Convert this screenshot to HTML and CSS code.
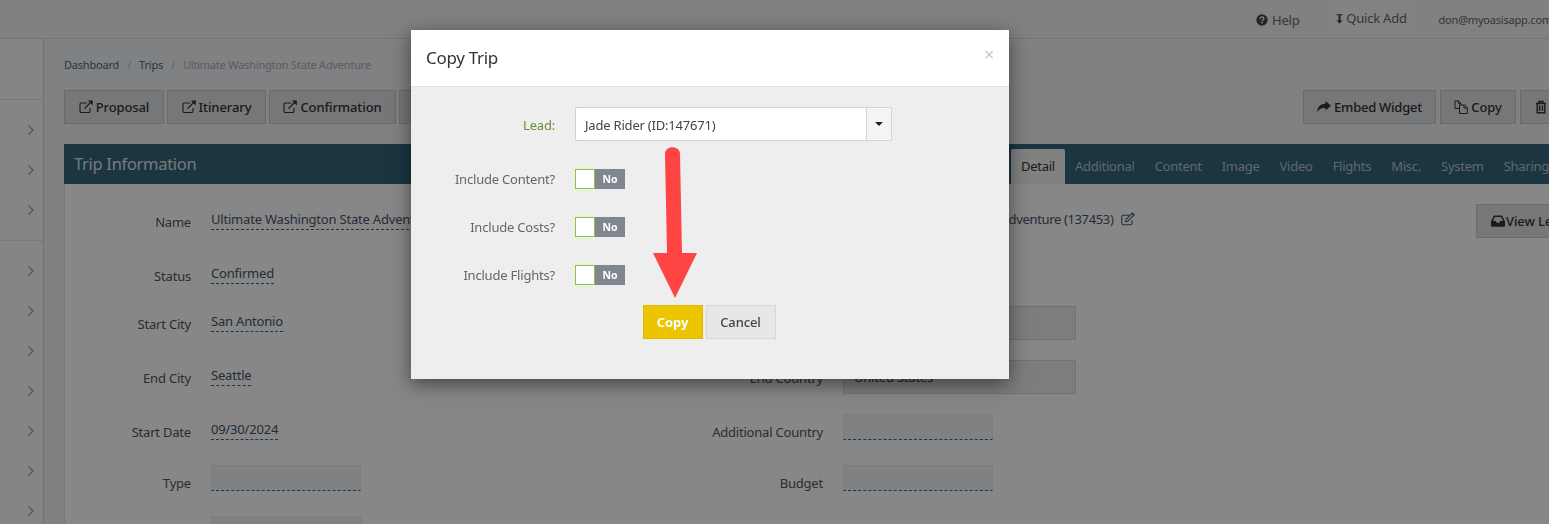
FILE: index.html
```html
<!DOCTYPE html>
<html lang="en">
<head>
<meta charset="utf-8">
<title>Copy Trip</title>
<link rel="stylesheet" href="styles.css">
</head>
<body>
<svg class="defs" width="0" height="0" aria-hidden="true">
  <symbol id="i-ext" viewBox="0 0 14 14"><path d="M11 8v3.2a1.3 1.3 0 0 1-1.3 1.3H2.3A1.3 1.3 0 0 1 1 11.2V4.3A1.3 1.3 0 0 1 2.3 3H8" fill="none" stroke="currentColor" stroke-width="1.1"/><path d="M5.5 8.6 11.8 2.3" fill="none" stroke="currentColor" stroke-width="1.3"/><path d="M8.8.6h5v5z" fill="currentColor"/></symbol>
  <symbol id="i-chev" viewBox="0 0 8 12"><path d="M1.5 1.5 6 6l-4.5 4.5" fill="none" stroke="currentColor" stroke-width="1.1"/></symbol>
  <symbol id="i-edit" viewBox="0 0 14 14"><path d="M11 8.5v2.8a1.4 1.4 0 0 1-1.4 1.4H2.2A1.4 1.4 0 0 1 .8 11.3V4.6a1.4 1.4 0 0 1 1.4-1.4H8" fill="none" stroke="currentColor" stroke-width="1.1"/><path d="M5 7.4 11 1.4l1.8 1.8-6 6-2.2.5z" fill="none" stroke="currentColor" stroke-width="1.1"/><path d="M10.6 1.2 11.6.4 13.8 2.6 13 3.6z" fill="currentColor"/></symbol>
</svg>

<div class="app">
  <header class="topbar">
    <a class="top-item"><svg class="ic-help" viewBox="0 0 14 14"><circle cx="7" cy="7" r="6.6" fill="currentColor"/><path d="M4.9 5.5c0-3 4.3-2.7 4.3-.2 0 1.7-2.2 1.6-2.2 3.1" fill="none" stroke="#f4f4f4" stroke-width="1.6"/><rect x="6.1" y="9.3" width="1.8" height="1.7" fill="#f4f4f4"/></svg> Help</a>
    <div class="top-quick"><a class="quick-box"><svg class="ic-quick" viewBox="0 0 8 12"><path d="M0.5 1h7v1.4H5v5.8h2.4L4 11.6.6 8.2H3V2.4H.5z" fill="currentColor"/></svg>Quick Add</a></div>
    <a class="top-user">don@myoasisapp.com</a>
  </header>

  <div class="shell">
    <nav class="sidebar">
      <div class="side-top"></div>
      <ul class="side-group">
        <li class="side-item"><svg class="ic-chev"><use href="#i-chev"/></svg></li>
        <li class="side-item"><svg class="ic-chev"><use href="#i-chev"/></svg></li>
        <li class="side-item"><svg class="ic-chev"><use href="#i-chev"/></svg></li>
      </ul>
      <ul class="side-group side-last">
        <li class="side-item"><svg class="ic-chev"><use href="#i-chev"/></svg></li>
        <li class="side-item"><svg class="ic-chev"><use href="#i-chev"/></svg></li>
        <li class="side-item"><svg class="ic-chev"><use href="#i-chev"/></svg></li>
        <li class="side-item"><svg class="ic-chev"><use href="#i-chev"/></svg></li>
        <li class="side-item"><svg class="ic-chev"><use href="#i-chev"/></svg></li>
        <li class="side-item"><svg class="ic-chev"><use href="#i-chev"/></svg></li>
        <li class="side-item"><svg class="ic-chev"><use href="#i-chev"/></svg></li>
      </ul>
    </nav>

    <main class="main">
      <div class="crumbs">
        <a>Dashboard</a><span class="sep">/</span><a>Trips</a><span class="sep">/</span><span class="crumb-now">Ultimate Washington State Adventure</span>
      </div>

      <div class="toolbar">
        <div class="tool-left">
          <a class="btn btn-proposal"><svg class="ic"><use href="#i-ext"/></svg>Proposal</a>
          <a class="btn btn-itin"><svg class="ic"><use href="#i-ext"/></svg>Itinerary</a>
          <a class="btn btn-conf"><svg class="ic"><use href="#i-ext"/></svg>Confirmation</a>
          <a class="btn btn-hidden"><svg class="ic"><use href="#i-ext"/></svg>Invoice</a>
        </div>
        <div class="tool-right">
          <a class="btn btn-embed"><svg class="ic ic-share" viewBox="0 0 14 12"><path d="M8.5 0 14 4.8 8.5 9.6V6.9C4.5 6.8 2 7.6.4 11.4.2 6.6 2.6 3 8.5 2.7z" fill="currentColor"/></svg>Embed Widget</a>
          <a class="btn btn-copy"><svg class="ic" viewBox="0 0 14 14"><path d="M5.5 8.5H1V1h3.6L6.8 3.2V5M4.5 1v2.6h2.3M5.5 5h5l2.8 2.6v5.9H5.5zM10 5v3h3.3" fill="none" stroke="currentColor" stroke-width="1"/></svg>Copy</a>
          <a class="btn btn-trash"><svg class="ic" viewBox="0 0 14 14"><path d="M2 3.5h10M5 3.5V1.5h4v2M3.2 3.5v9.3h7.6V3.5M5.6 5.5v5.5M8.4 5.5v5.5" fill="none" stroke="currentColor" stroke-width="1.4"/></svg>Delete</a>
        </div>
      </div>

      <section class="panel">
        <div class="panel-head">
          <h2 class="panel-title">Trip Information</h2>
          <ul class="tabs">
            <li class="tab tab-on">Detail</li>
            <li class="tab">Additional</li>
            <li class="tab">Content</li>
            <li class="tab">Image</li>
            <li class="tab">Video</li>
            <li class="tab">Flights</li>
            <li class="tab">Misc.</li>
            <li class="tab">System</li>
            <li class="tab">Sharing</li>
          </ul>
        </div>
        <div class="form">
          <div class="lbl">Name</div>
          <div class="val"><span class="edit">Ultimate Washington State Adventure</span></div>
          <div class="lbl"></div>
          <div class="val val-link"><span class="link-text">Ultimate Washington State Adventure (137453)<svg class="ic-edit"><use href="#i-edit"/></svg></span><a class="btn btn-leads"><svg class="ic ic-inbox" viewBox="0 0 14 12"><path d="M3 .5h8l3 6V11a.8.8 0 0 1-.8.8H.8A.8.8 0 0 1 0 11V6.5zM3.9 2 2 6h2.8l.9 1.8h2.6L9.2 6H12l-1.9-4z" fill="currentColor" fill-rule="evenodd"/></svg>View Leads</a></div>

          <div class="lbl">Status</div>
          <div class="val"><span class="edit">Confirmed</span></div>
          <div class="lbl"></div>
          <div class="val"></div>

          <div class="lbl">Start City</div>
          <div class="val"><span class="edit">San Antonio</span></div>
          <div class="lbl"></div>
          <div class="val"><span class="field"></span></div>

          <div class="lbl">End City</div>
          <div class="val"><span class="edit">Seattle</span></div>
          <div class="lbl">End Country</div>
          <div class="val"><span class="field">United States</span></div>

          <div class="lbl">Start Date</div>
          <div class="val"><span class="edit">09/30/2024</span></div>
          <div class="lbl">Additional Country</div>
          <div class="val"><span class="blank"></span></div>

          <div class="lbl">Type</div>
          <div class="val"><span class="blank"></span></div>
          <div class="lbl">Budget</div>
          <div class="val"><span class="blank"></span></div>

          <div class="lbl"></div>
          <div class="val"><span class="blank"></span></div>
          <div class="lbl"></div>
          <div class="val"></div>
        </div>
      </section>
    </main>
  </div>
</div>

<div class="backdrop"></div>

<div class="modal">
  <div class="modal-head">
    <h3 class="modal-title">Copy Trip</h3>
    <span class="modal-x">×</span>
  </div>
  <div class="modal-body">
    <div class="m-row m-row-lead">
      <label class="m-lbl m-lbl-green">Lead:</label>
      <div class="select">
        <span class="select-text">Jade Rider (ID:147671)</span>
        <span class="select-btn"><span class="caret"></span></span>
      </div>
    </div>
    <div class="m-row">
      <label class="m-lbl">Include Content?</label>
      <span class="toggle"><span class="tg-knob"></span><span class="tg-no">No</span></span>
    </div>
    <div class="m-row">
      <label class="m-lbl">Include Costs?</label>
      <span class="toggle"><span class="tg-knob"></span><span class="tg-no">No</span></span>
    </div>
    <div class="m-row">
      <label class="m-lbl">Include Flights?</label>
      <span class="toggle"><span class="tg-knob"></span><span class="tg-no">No</span></span>
    </div>
    <div class="m-actions">
      <button class="m-btn m-copy">Copy</button>
      <button class="m-btn m-cancel">Cancel</button>
    </div>
  </div>
</div>

<svg class="arrow" viewBox="0 0 60 170" width="60" height="170" aria-hidden="true">
  <path d="M12 8C12-1 27-1 27 8L29 107H44L22 152 0 107H14Z" fill="#ff4444"/>
</svg>
</body>
</html>
```
FILE: styles.css
```css
* { box-sizing: border-box; }
html, body { margin: 0; padding: 0; height: 100%; overflow: hidden; }
body {
  font-family: "Noto Sans", "Open Sans", sans-serif;
  font-size: 13px;
  letter-spacing: -0.2px;
  color: #555;
  background: #fff;
}
ul { list-style: none; margin: 0; padding: 0; }
h2, h3 { margin: 0; font-weight: 400; }
.defs { position: absolute; }

.app { height: 524px; width: 1549px; overflow: hidden; display: flex; flex-direction: column; }

/* top bar */
.topbar {
  height: 39px; flex: none;
  background: #f3f3f3;
  border-bottom: 1px solid #dcdcdc;
  display: flex; justify-content: flex-end; align-items: stretch;
  white-space: nowrap; color: #666;
}
.top-item { display: flex; align-items: center; gap: 4px; font-size: 13px; padding-top: 1px; padding-right: 17px; }
.ic-help { width: 12px; height: 12px; color: #444; }
.top-quick {
  width: 110px; display: flex; align-items: center; justify-content: center;
  border-left: 1px solid #ededed; border-right: 1px solid #ededed;
}
.quick-box {
  width: 86px; height: 23px; display: flex; align-items: center; justify-content: center; gap: 3px;
  background: #f7f7f7; color: #666; margin-bottom: 2px;
}
.ic-quick { width: 7px; height: 11px; color: #333; }
.top-user { display: flex; align-items: center; font-size: 11px; margin-left: 12px; margin-right: -3px; color: #666; }

/* shell */
.shell { flex: 1; display: flex; min-height: 0; }
.sidebar { width: 44px; flex: none; background: #fbfbfb; border-right: 1px solid #d4d6d8; }
.side-top { height: 61px; border-bottom: 1px solid #e4e4e4; }
.side-group { padding: 10px 0; border-bottom: 1px solid #e4e4e4; }
.side-last { border-bottom: 0; }
.side-item { height: 40px; display: flex; align-items: center; justify-content: flex-end; padding-right: 8px; color: #999; }
.ic-chev { width: 8px; height: 12px; }

.main { flex: 1; min-width: 0; background: #f1f4f7; padding-left: 20px; overflow: hidden; }

.crumbs { height: 51px; padding-top: 17px; font-size: 11px; line-height: 18px; white-space: nowrap; color: #4d6a80; }
.sep { margin: 0 8px; color: #bbb; }
.crumb-now { color: #aab0b5; }

.toolbar { display: flex; height: 34px; margin-bottom: 20px; }
.tool-left { display: flex; gap: 3px; width: 1239px; flex: none; }
.tool-right { display: flex; gap: 4px; flex: none; }
.btn {
  height: 34px; display: inline-flex; align-items: center; justify-content: center; flex: none;
  background: #dfe0e2; border: 1px solid #c9cbce; color: #333;
  font-size: 13px; font-weight: 500; letter-spacing: -0.1px; white-space: nowrap;
}
.ic { width: 14px; height: 14px; margin-right: 3px; }
.ic-share { height: 12px; }
.ic-inbox { height: 12px; margin-right: 1px; }
.btn-proposal { width: 100px; }
.btn-itin { width: 99px; }
.btn-conf { width: 127px; }
.btn-hidden { width: 100px; }
.btn-embed { width: 133px; letter-spacing: -0.25px; }
.btn-copy { width: 76px; }
.btn-trash { width: 90px; justify-content: flex-start; padding-left: 13px; }

/* panel */
.panel { width: 1520px; background: #fff; border-left: 1px solid #e3e6e8; }
.panel-head {
  height: 40px; margin-left: -1px; background: #33647c;
  display: flex; align-items: flex-end;
}
.panel-title { width: 947px; flex: none; align-self: center; padding: 0 0 2px 10px; font-size: 16.5px; letter-spacing: -0.3px; color: #dfe6ea; }
.tabs { display: flex; flex: none; height: 35px; white-space: nowrap; }
.tab { padding: 0 10px; line-height: 35px; color: #b5c6d0; font-size: 13px; letter-spacing: -0.26px; }
.tab-on { background: #f3f3f3; color: #333; border-radius: 2px 2px 0 0; }

/* form */
.form {
  margin-top: 14px;
  display: grid;
  grid-template-columns: 126px 409px 183px 1fr;
  grid-template-rows: 54px 48px 54px 54px 51px 51px 51px;
  column-gap: 20px;
}
.lbl { text-align: right; padding-top: 15px; line-height: 18px; color: #555; white-space: nowrap; }
.val { padding-top: 12px; min-width: 0; white-space: nowrap; overflow: hidden; color: #43566a; line-height: 18px; }
.form > .val:has(.field), .form > .val:has(.blank), .val-link { padding-top: 6px; }
.edit { display: inline-block; height: 20px; border-bottom: 1px dashed #2a6a9a; }
.blank { display: block; width: 150px; height: 26px; background: #f0f4f8; border: 1px solid #e6ebf0; border-bottom: 1px dashed #1f6ea8; }
.field {
  display: block; width: 233px; height: 34px; padding: 7px 10px;
  background: #ebecee; border: 1px solid #d6d8da; color: #444;
}
.val-link { display: flex; overflow: visible; }
.link-text { flex: none; width: 633px; padding-top: 6px; letter-spacing: -0.36px; }
.ic-edit { width: 14px; height: 14px; margin-left: 8px; vertical-align: -2px; color: #33647c; }
.btn-leads { width: 140px; justify-content: flex-start; padding-left: 14px; }

/* modal */
.backdrop { position: fixed; inset: 0; background: rgba(0, 0, 0, 0.47); }
.modal {
  position: absolute; left: 411px; top: 30px; width: 598px; height: 349px;
  background: #eee; box-shadow: 0 5px 18px rgba(0, 0, 0, 0.5);
  display: flex; flex-direction: column;
}
.modal-head {
  height: 57px; flex: none; background: #fff; border-bottom: 1px solid #e4e4e4;
  display: flex; align-items: center; justify-content: space-between;
  padding: 0 15px; color: #333;
}
.modal-title { font-size: 17px; letter-spacing: -0.3px; color: #333; margin-bottom: 2px; }
.modal-x { font-size: 18px; color: #c8c8c8; margin-top: -8px; }
.modal-body { flex: 1; padding-top: 20px; }
.m-row { display: flex; align-items: center; height: 20px; margin-bottom: 28px; }
.m-row-lead { height: 34px; }
.m-lbl { width: 144px; margin-right: 20px; text-align: right; color: #666; white-space: nowrap; }
.m-lbl-green { color: #6a8f3a; padding-top: 1px; }
.select {
  width: 317px; height: 34px; display: flex;
  background: #fff; border: 1px solid #d2d2d2; border-radius: 2px;
}
.select-text { flex: 1; padding: 1px 0 0 9px; line-height: 32px; color: #444; }
.select-btn { width: 25px; border-left: 1px solid #d2d2d2; background: #f4f4f4; display: flex; align-items: center; justify-content: center; }
.caret { width: 0; height: 0; border-left: 4px solid transparent; border-right: 4px solid transparent; border-top: 4px solid #222; }
.toggle { display: flex; width: 50px; height: 20px; }
.tg-knob { width: 20px; background: #fff; border: 1px solid #8cc63f; }
.tg-no { flex: 1; background: #80868e; color: #fff; font-size: 10.5px; font-weight: 700; text-align: center; line-height: 20px; letter-spacing: 0; }
.m-actions { display: flex; justify-content: center; gap: 3px; margin-top: -8px; padding-right: 2px; }
.m-btn { height: 34px; font-family: inherit; font-size: 13px; letter-spacing: -0.1px; padding: 0; }
.m-copy { width: 60px; background: #ecc400; border: 1px solid #e0b800; color: #fff; font-weight: 700; }
.m-cancel { width: 70px; background: #e6e7e9; border: 1px solid #d6d7d9; color: #444; font-weight: 500; }

.arrow { position: absolute; left: 653px; top: 146px; }
```
